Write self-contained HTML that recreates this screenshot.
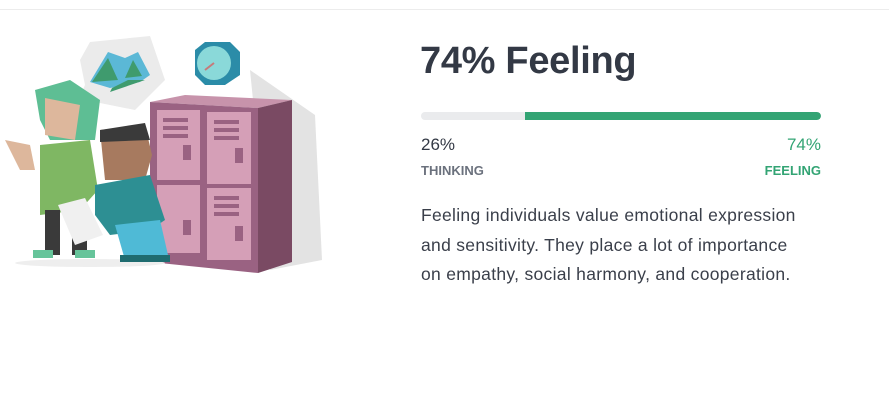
<!DOCTYPE html>
<html><head><meta charset="utf-8"><style>
body{margin:0;width:889px;height:409px;background:#fff;font-family:"Liberation Sans",sans-serif;position:relative;overflow:hidden}
.top{position:absolute;left:0;top:9px;width:889px;height:1px;background:#ececec}
.t{position:absolute;left:420px;top:40px;font-size:38px;font-weight:600;color:#333945;letter-spacing:-0.3px}
.bar{position:absolute;left:421px;top:112px;width:400px;height:8px;border-radius:4px;background:#eaebed;overflow:hidden}
.bar i{position:absolute;left:104px;top:0;right:0;height:8px;background:#33a474;border-radius:0 4px 4px 0}
.p{position:absolute;font-size:17px;color:#333945;top:135px}
.l{position:absolute;font-size:13px;font-weight:bold;top:163px;color:#6b717d}
.d{position:absolute;left:421px;top:201px;width:385px;font-size:17.5px;letter-spacing:0.3px;line-height:29.5px;color:#3a3f4a}
</style></head><body>
<div class="top"></div>
<svg style="position:absolute;left:0;top:30px" width="340" height="250" viewBox="0 0 340 250">
<polygon points="80,30 90,12 150,6 165,50 135,80 95,72 78,70 85,55" fill="#ebebeb"/>
<polygon points="90,52 108,22 125,28 138,22 150,45 140,52 110,58" fill="#5bb8d6"/>
<polygon points="92,52 108,28 118,50" fill="#3f9b6e"/>
<polygon points="125,48 133,30 142,46" fill="#3f9b6e"/>
<polygon points="112,58 128,50 145,50 110,62" fill="#3f9b6e"/>
<polygon points="195,20 205,12 230,12 240,22 240,45 225,55 205,55 195,45" fill="#2b8ca8"/>
<circle cx="214" cy="33" r="17" fill="#8ad9d9"/>
<line x1="214" y1="33" x2="205" y2="40" stroke="#c67a7a" stroke-width="2"/>
<polygon points="250,40 315,85 322,230 270,240" fill="#e3e3e3"/>
<polygon points="150,72 185,65 292,70 258,78" fill="#c793ab"/>
<polygon points="150,72 258,78 258,243 150,232" fill="#9a6282"/>
<polygon points="258,78 292,70 292,232 258,243" fill="#7a4a63"/>
<rect x="157" y="80" width="43" height="70" fill="#d59fb7"/>
<rect x="207" y="82" width="44" height="72" fill="#d59fb7"/>
<rect x="157" y="155" width="43" height="68" fill="#d59fb7"/>
<rect x="207" y="158" width="44" height="72" fill="#d59fb7"/>
<g fill="#9a6282"><rect x="163" y="88" width="25" height="4"/><rect x="163" y="96" width="25" height="4"/><rect x="163" y="104" width="25" height="4"/><rect x="214" y="90" width="25" height="4"/><rect x="214" y="98" width="25" height="4"/><rect x="214" y="106" width="25" height="4"/><rect x="214" y="166" width="25" height="4"/><rect x="214" y="174" width="25" height="4"/><rect x="214" y="182" width="25" height="4"/><rect x="183" y="115" width="8" height="15"/><rect x="235" y="118" width="8" height="15"/><rect x="235" y="196" width="8" height="15"/><rect x="183" y="190" width="8" height="15"/></g>
<ellipse cx="90" cy="233" rx="75" ry="4" fill="#eeeeee"/>
<polygon points="35,60 70,50 100,70 95,110 50,110 40,90" fill="#5ebe94"/>
<polygon points="45,68 80,75 75,110 45,105" fill="#ddb79c"/>
<polygon points="40,115 90,110 98,160 80,180 40,185" fill="#7fb763"/>
<polygon points="5,110 20,140 35,140 30,115" fill="#ddb79c"/>
<rect x="45" y="180" width="15" height="45" fill="#3a3a3a"/><rect x="72" y="180" width="15" height="45" fill="#3a3a3a"/>
<rect x="33" y="220" width="20" height="8" fill="#66c49a"/><rect x="75" y="220" width="20" height="8" fill="#66c49a"/>
<polygon points="100,100 145,95 152,125 145,150 105,150" fill="#a77a5f"/>
<polygon points="100,100 145,93 150,110 100,112" fill="#3a3a3a"/>
<polygon points="95,155 150,145 165,190 150,200 110,205 95,185" fill="#2d8f93"/>
<polygon points="115,195 160,190 168,225 125,230" fill="#4fbad6"/>
<rect x="120" y="225" width="25" height="7" fill="#1f6c70"/><rect x="145" y="225" width="25" height="7" fill="#1f6c70"/>
<polygon points="58,175 85,168 103,205 75,215" fill="#f0f0f0"/>
</svg>
<div class="t">74% Feeling</div>
<div class="bar"><i></i></div>
<div class="p" style="left:421px">26%</div>
<div class="p" style="right:68px;color:#33a474">74%</div>
<div class="l" style="left:421px">THINKING</div>
<div class="l" style="right:68px;color:#33a474">FEELING</div>
<div class="d">Feeling individuals value emotional expression and sensitivity. They place a lot of importance on empathy, social harmony, and cooperation.</div>
</body></html>
